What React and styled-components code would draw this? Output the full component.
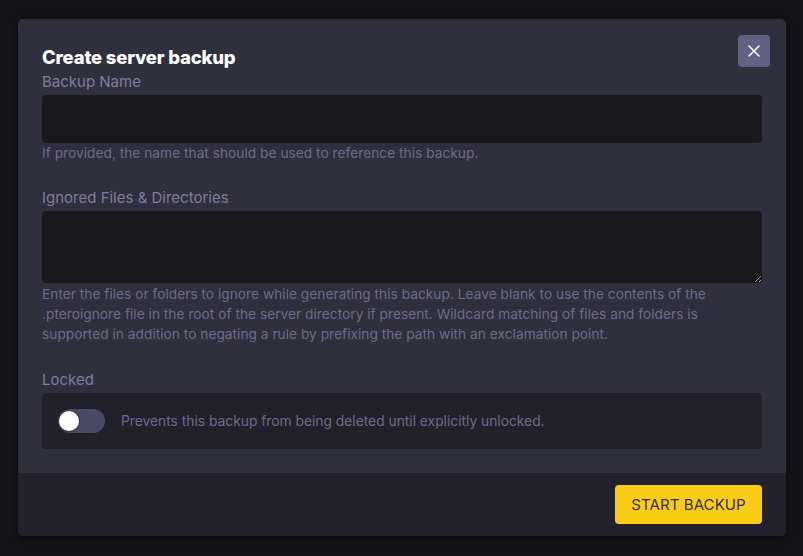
import React from "react";
import styled, { createGlobalStyle } from "styled-components";

const Global = createGlobalStyle`
  html, body { margin: 0; padding: 0; background: #131318; }
  body { font-family: Inter, "Noto Sans", sans-serif; -webkit-font-smoothing: antialiased; }
  * { box-sizing: border-box; }
`;

const Page = styled.div`
  width: 803px;
  height: 556px;
  padding: 19px 17px 0 18px;
  background: #131318;
`;

const Modal = styled.div`
  position: relative;
  width: 768px;
  border-radius: 5px;
  overflow: hidden;
  background: #302f3e;
  box-shadow: 0 2px 6px rgba(0, 0, 0, 0.4);
`;

const Body = styled.div`
  display: flex;
  flex-direction: column;
  padding: 24px 24px 24px;
`;

const Title = styled.h2`
  margin: 0 0 1px;
  font-family: Inter, sans-serif;
  font-weight: 800;
  font-size: 18.5px;
  line-height: 28px;
  letter-spacing: -0.2px;
  color: #ffffff;
`;

const Close = styled.button`
  position: absolute;
  top: 16px;
  right: 16px;
  width: 32px;
  height: 32px;
  border: 0;
  border-radius: 4px;
  background: #636180;
  display: flex;
  align-items: center;
  justify-content: center;
  padding: 0;
  cursor: pointer;
`;

const Field = styled.div`
  display: flex;
  flex-direction: column;
  margin-top: ${(p) => p.$gap || 0}px;
`;

const Label = styled.label`
  font-size: 15px;
  line-height: 20px;
  color: #7f7c9c;
  margin-bottom: 3px;
`;

const Input = styled.input`
  width: 100%;
  height: 48px;
  border: 0;
  border-radius: 4px;
  background: #18181d;
  outline: none;
  color: #ddd;
  padding: 0 12px;
`;

const TextArea = styled.textarea`
  width: 100%;
  height: 72px;
  border: 0;
  border-radius: 4px;
  background: #18181d;
  outline: none;
  resize: vertical;
  color: #ddd;
  padding: 10px 12px;
  display: block;
  color-scheme: dark;
`;

const Help = styled.p`
  margin: ${(p) => p.$top || 0}px 0 0;
  font-size: 13.75px;
  line-height: 20px;
  color: #6d6b89;
  white-space: nowrap;
`;

const LockBox = styled.div`
  display: flex;
  align-items: center;
  gap: 16px;
  height: 56px;
  padding: 0 16px;
  border-radius: 4px;
  background: #22212b;
`;

const Track = styled.div`
  position: relative;
  width: 47px;
  height: 24px;
  border-radius: 12px;
  background: #4a4963;
  flex-shrink: 0;
`;

const Knob = styled.div`
  position: absolute;
  left: 1px;
  top: 2px;
  width: 20px;
  height: 20px;
  border-radius: 50%;
  background: #ffffff;
  box-shadow: 0 0 0 1px #3a3950;
`;

const LockText = styled.span`
  font-size: 13.8px;
  color: #6d6b89;
`;

const Footer = styled.div`
  display: flex;
  justify-content: flex-end;
  padding: 12px 24px;
  background: #23222c;
`;

const Button = styled.button`
  height: 39px;
  width: 147px;
  border: 0;
  border-radius: 4px;
  background: #facc15;
  color: #33323f;
  font-family: Inter, sans-serif;
  font-size: 15px;
  letter-spacing: 0.1px;
  cursor: pointer;
`;

export default function App() {
  return (
    <>
      <Global />
      <Page>
        <Modal>
          <Close aria-label="Close">
            <svg width="14" height="14" viewBox="0 0 14 14">
              <path d="M2 2 L12 12 M12 2 L2 12" stroke="#fff" strokeWidth="1.5" strokeLinecap="round" />
            </svg>
          </Close>
          <Body>
            <Title>Create server backup</Title>
            <Field>
              <Label>Backup Name</Label>
              <Input type="text" />
              <Help>If provided, the name that should be used to reference this backup.</Help>
            </Field>
            <Field $gap={25}>
              <Label>Ignored Files &amp; Directories</Label>
              <TextArea />
              <Help $top={1}>
                Enter the files or folders to ignore while generating this backup. Leave blank to use the contents of the
                <br />
                .pteroignore file in the root of the server directory if present. Wildcard matching of files and folders is
                <br />
                supported in addition to negating a rule by prefixing the path with an exclamation point.
              </Help>
            </Field>
            <Field $gap={26}>
              <Label>Locked</Label>
              <LockBox>
                <Track>
                  <Knob />
                </Track>
                <LockText>Prevents this backup from being deleted until explicitly unlocked.</LockText>
              </LockBox>
            </Field>
          </Body>
          <Footer>
            <Button>START BACKUP</Button>
          </Footer>
        </Modal>
      </Page>
    </>
  );
}
